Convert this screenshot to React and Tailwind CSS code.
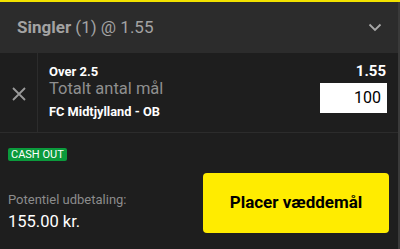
import React from "react";

function Chevron() {
  return (
    <svg width="14" height="9" viewBox="0 0 14 9" fill="none">
      <path d="M1.5 1.5 L7 7 L12.5 1.5" stroke="#a8a8a8" strokeWidth="1.8" />
    </svg>
  );
}

function CloseIcon() {
  return (
    <svg width="14" height="14" viewBox="0 0 14 14" fill="none">
      <path d="M1 1 L13 13 M13 1 L1 13" stroke="#9a9a9a" strokeWidth="1.8" />
    </svg>
  );
}

export default function App() {
  return (
    <div
      className="w-[400px] h-[249px] flex flex-col overflow-hidden bg-[#1e1e1e]"
      style={{ fontFamily: "Roboto, 'Liberation Sans', sans-serif" }}
    >
      <div className="h-[2px] bg-[#f2e200]" />
      <div className="flex flex-1 min-h-0">
        <div className="flex-1 flex flex-col">
          {/* Header */}
          <div className="h-[51px] bg-[#2c2c2c] flex items-center justify-between pl-[17px] pr-[16px]">
            <div className="text-[17px] text-[#a3a3a3] leading-none">
              <span className="font-bold">Singler</span> (1) @ 1.55
            </div>
            <Chevron />
          </div>

          {/* Bet row */}
          <div className="h-[80px] flex border-b border-[#2c2c2c]">
            <div className="w-[38px] border-r border-[#2c2c2c] flex items-center justify-center pt-[3px]">
              <CloseIcon />
            </div>
            <div className="flex-1 flex justify-between pl-[11px] pr-[11px]">
              <div className="flex flex-col pt-[11px]">
                <div className="text-[13px] font-bold text-white leading-[16px]">
                  Over 2.5
                </div>
                <div className="text-[16.5px] text-[#8f8f8f] leading-[18px]">
                  Totalt antal mål
                </div>
                <div className="text-[12.8px] font-bold text-white leading-[16px] mt-[6px]">
                  FC Midtjylland - OB
                </div>
              </div>
              <div className="flex flex-col items-end pt-[9px]">
                <div className="text-[15px] font-bold text-white leading-[18px] pr-[1px]">
                  1.55
                </div>
                <div className="mt-[3px] w-[67px] h-[30px] bg-white flex items-center justify-end pr-[6px] text-[16px] text-black">
                  100
                </div>
              </div>
            </div>
          </div>

          {/* Footer */}
          <div className="flex-1 flex justify-between pl-[8px] pr-[9px]">
            <div className="flex flex-col pt-[15px]">
              <div className="self-start bg-[#0b9a3c] text-white text-[11px] leading-[13px] px-[3px] rounded-[2px]">
                CASH OUT
              </div>
              <div className="mt-[31px] text-[13px] text-[#8c8c8c] leading-[16px]">
                Potentiel udbetaling:
              </div>
              <div className="mt-[4px] text-[16.5px] text-white leading-[20px]">
                155.00 kr.
              </div>
            </div>
            <div className="pt-[40px]">
              <button className="w-[186px] h-[60px] bg-[#ffec00] rounded-[4px] text-black font-bold text-[17px] flex items-center justify-center">
                Placer væddemål
              </button>
            </div>
          </div>
        </div>
        <div className="w-[2px] bg-[#3a3a3a]" />
      </div>
    </div>
  );
}
